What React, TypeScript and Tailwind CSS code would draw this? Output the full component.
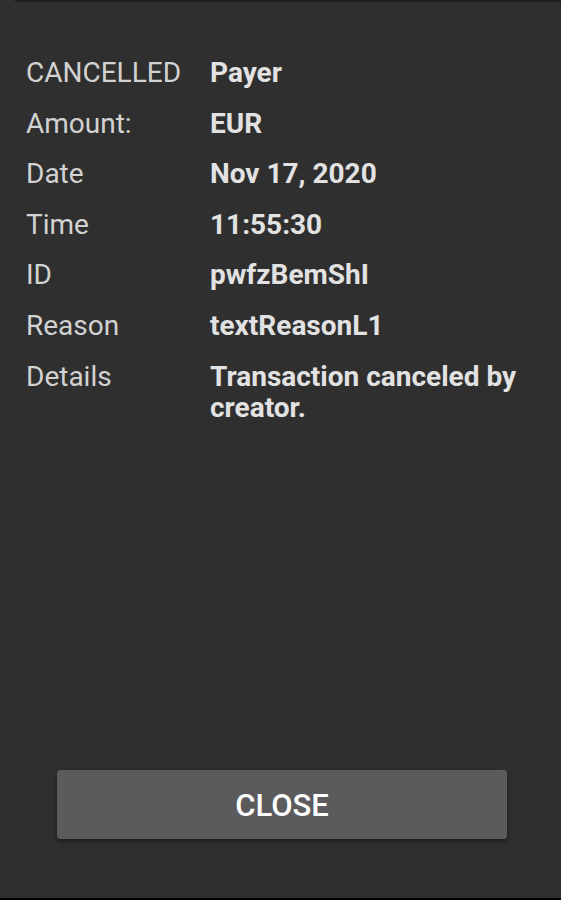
import React from "react";

const rows: [string, string][] = [
  ["CANCELLED", "Payer"],
  ["Amount:", "EUR"],
  ["Date", "Nov 17, 2020"],
  ["Time", "11:55:30"],
  ["ID", "pwfzBemShI"],
  ["Reason", "textReasonL1"],
  ["Details", "Transaction canceled by creator."],
];

export default function App() {
  return (
    <div
      className="w-[561px] h-[900px] bg-[#2f2f2f] flex flex-col"
      style={{ fontFamily: "Roboto, 'Liberation Sans', sans-serif" }}
    >
      <div className="h-[2px] flex">
        <div className="w-[15px] bg-[#2f2f2f]" />
        <div className="flex-1 bg-[#1e1e1e]" />
      </div>
      <div className="flex-1 flex flex-col pt-[55px] px-[26px]">
        <div className="flex flex-col gap-[19.6px]">
          {rows.map(([label, value]) => (
            <div key={label} className="flex text-[28px] leading-[31px]">
              <div className="w-[184px] shrink-0 text-[#d2d2d2]">{label}</div>
              <div className="w-[320px] font-bold text-[#e2e2e2]">{value}</div>
            </div>
          ))}
        </div>
        <div className="flex-1" />
        <div className="flex justify-center pb-[59px]">
          <button className="w-[450px] h-[69px] ml-[3px] rounded-[3px] bg-[#5b5b5d] text-white text-[31px] font-medium shadow-[0_2px_4px_rgba(0,0,0,0.45)]">
            <span className="relative top-[2px]">CLOSE</span>
          </button>
        </div>
      </div>
      <div className="h-[2px] bg-black" />
    </div>
  );
}
